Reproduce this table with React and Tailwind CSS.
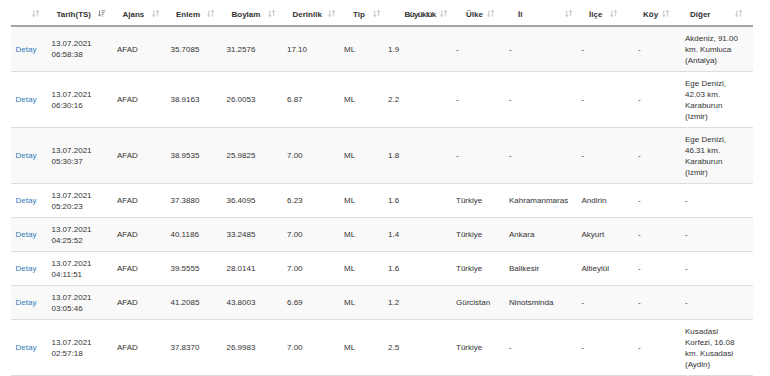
import React from "react";

const widths = [
  "w-[36px]",
  "w-[65.5px]",
  "w-[53.5px]",
  "w-[56px]",
  "w-[60.5px]",
  "w-[57px]",
  "w-[44px]",
  "w-[68px]",
  "w-[53px]",
  "w-[72.5px]",
  "w-[56.5px]",
  "w-[47px]",
  "w-[72.5px]",
];

// label offset / icon offset measured from each header cell's left edge
const headers = [
  { label: "", pl: "pl-[0px]", icon: "left-[20.5px]" },
  { label: "Tarih(TS)", pl: "pl-[9.5px]", icon: "left-[50.5px]", active: true },
  { label: "Ajans", pl: "pl-[10px]", icon: "left-[39px]" },
  { label: "Enlem", pl: "pl-[10px]", icon: "left-[40.5px]" },
  { label: "Boylam", pl: "pl-[9.5px]", icon: "left-[46px]" },
  { label: "Derinlik", pl: "pl-[10px]", icon: "left-[45.5px]" },
  { label: "Tip", pl: "pl-[13.5px]", icon: "left-[33px]" },
  { label: "Büyüklük", pl: "pl-[21px] tracking-[-0.6px]", icon: "left-[56.5px]" },
  { label: "Ülke", pl: "pl-[14.5px]", icon: "left-[35px]" },
  { label: "İl", pl: "pl-[13.5px]", icon: "left-[60.5px]" },
  { label: "İlçe", pl: "pl-[12px]", icon: "left-[33px]" },
  { label: "Köy", pl: "pl-[9.5px]", icon: "left-[28px]" },
  { label: "Diğer", pl: "pl-[9.5px]", icon: "left-[54.5px]" },
];

const rows = [
  ["06:58:38", "35.7085", "31.2576", "17.10", "1.9", "-", "-", "-", "-", ["Akdeniz, 91.00", "km. Kumluca", "(Antalya)"]],
  ["06:30:16", "38.9163", "26.0053", "6.87", "2.2", "-", "-", "-", "-", ["Ege Denizi,", "42.03 km.", "Karaburun", "(Izmir)"]],
  ["05:30:37", "38.9535", "25.9825", "7.00", "1.8", "-", "-", "-", "-", ["Ege Denizi,", "46.31 km.", "Karaburun", "(Izmir)"]],
  ["05:20:23", "37.3880", "36.4095", "6.23", "1.6", "Türkiye", "Kahramanmaras", "Andirin", "-", ["-"]],
  ["04:25:52", "40.1186", "33.2485", "7.00", "1.4", "Türkiye", "Ankara", "Akyurt", "-", ["-"]],
  ["04:11:51", "39.5555", "28.0141", "7.00", "1.6", "Türkiye", "Balikesir", "Altieylül", "-", ["-"]],
  ["03:05:46", "41.2085", "43.8003", "6.69", "1.2", "Gürcistan", "Ninotsminda", "-", "-", ["-"]],
  ["02:57:18", "37.8370", "26.9983", "7.00", "2.5", "Türkiye", "-", "-", "-", ["Kusadasi", "Korfezi, 16.08", "km. Kusadasi", "(Aydin)"]],
];

const SortIcon = ({ active, className }) =>
  active ? (
    <svg viewBox="0 0 8 7" className={className} fill="none" stroke="#8a8a8a" strokeWidth="1">
      <path d="M1.5 0.5v5.5M0.2 4.6l1.3 1.6 1.3-1.6" />
      <path d="M3.6 0.8h3.6M3.6 2.6h2.8M3.6 4.4h2M3.6 6.2h1.2" />
    </svg>
  ) : (
    <svg viewBox="0 0 8 7" className={className} fill="none" stroke="#cccccc" strokeWidth="1.1">
      <path d="M1.8 0.5v6M0.5 5l1.3 1.5 1.3-1.5" />
      <path d="M5.6 6.5v-6M4.3 2l1.3-1.5 1.3 1.5" />
    </svg>
  );

const Td = ({ children, className = "" }) => (
  <td className={`px-[4.5px] py-[5.5px] align-middle ${className}`}>{children}</td>
);

export default function App() {
  return (
    <div className="min-h-screen bg-white pl-[11px] pt-[3px] font-['Liberation_Sans',Arial,sans-serif] text-[8px] leading-[11px] text-[#333]">
      <table className="w-[742px] table-fixed border-collapse text-left">
        <colgroup>
          {widths.map((w, i) => (
            <col key={i} className={w} />
          ))}
        </colgroup>
        <thead>
          <tr className="border-b-2 border-[#a3a3a3]">
            {headers.map((h, i) => (
              <th key={i} className={`relative py-[5.5px] ${h.pl} pr-0 font-bold whitespace-nowrap`}>
                {h.label || "\u00a0"}
                <SortIcon
                  active={h.active}
                  className={`absolute top-[7px] ${h.icon} h-[7px] w-[8px]`}
                />
              </th>
            ))}
          </tr>
        </thead>
        <tbody>
          {rows.map((r, i) => (
            <tr
              key={i}
              className={`border-b border-[#dddddd] ${i % 2 === 0 ? "bg-[#f9f9f9]" : "bg-white"}`}
            >
              <Td>
                <a href="#" className="text-[#337ab7]">
                  Detay
                </a>
              </Td>
              <Td>
                13.07.2021
                <br />
                {r[0]}
              </Td>
              <Td>AFAD</Td>
              <Td>{r[1]}</Td>
              <Td>{r[2]}</Td>
              <Td>{r[3]}</Td>
              <Td>ML</Td>
              <Td>{r[4]}</Td>
              <Td className="whitespace-nowrap">{r[5]}</Td>
              <Td className="whitespace-nowrap">{r[6]}</Td>
              <Td className="whitespace-nowrap">{r[7]}</Td>
              <Td>{r[8]}</Td>
              <Td>
                {r[9].map((line, j) => (
                  <React.Fragment key={j}>
                    {j > 0 && <br />}
                    {line}
                  </React.Fragment>
                ))}
              </Td>
            </tr>
          ))}
        </tbody>
      </table>
    </div>
  );
}
